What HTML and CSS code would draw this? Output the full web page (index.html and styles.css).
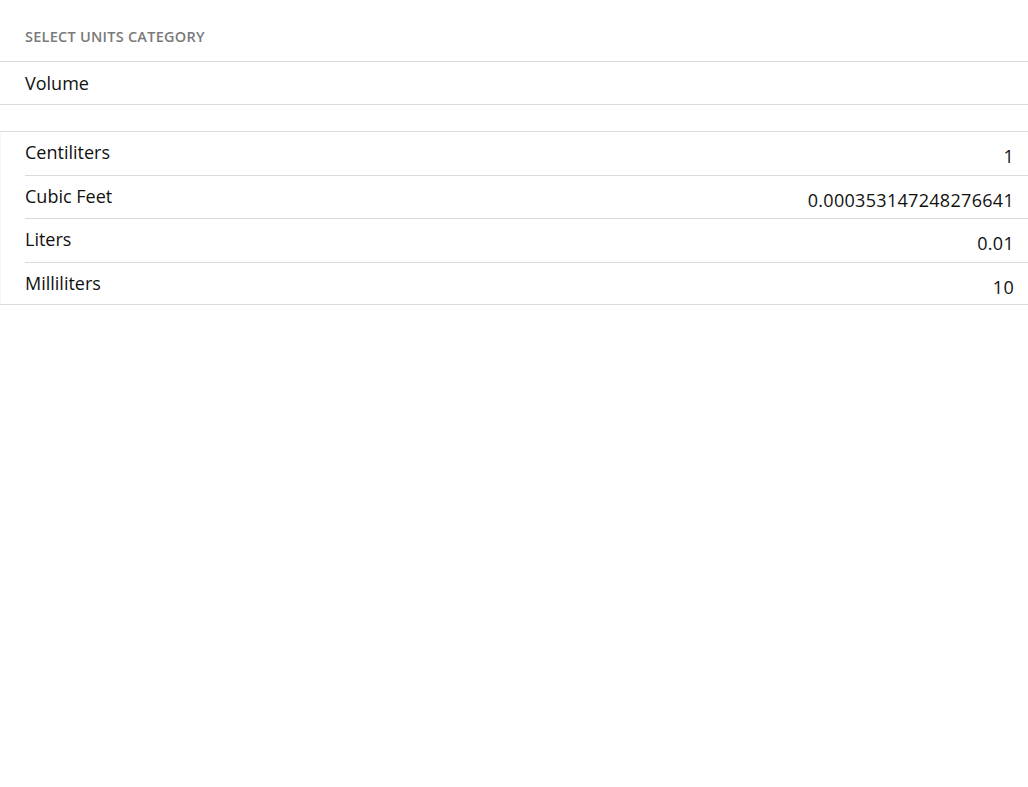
FILE: index.html
```html
<!DOCTYPE html>
<html>
<head>
<meta charset="utf-8">
<link rel="stylesheet" href="styles.css">
</head>
<body>
<div class="page">
  <div class="section-title">SELECT UNITS CATEGORY</div>
  <div class="category">Volume</div>
  <div class="spacer"></div>
  <ul class="units">
    <li class="unit"><span class="name">Centiliters</span><span class="value">1</span></li>
    <li class="unit"><span class="name">Cubic Feet</span><span class="value">0.000353147248276641</span></li>
    <li class="unit"><span class="name">Liters</span><span class="value">0.01</span></li>
    <li class="unit"><span class="name">Milliliters</span><span class="value">10</span></li>
  </ul>
</div>
</body>
</html>
```

FILE: styles.css
```css
html, body {
  margin: 0;
  padding: 0;
  background: #ffffff;
}
body {
  font-family: "Open Sans", "Noto Sans", sans-serif;
  color: #1a1a1a;
}
.page {
  width: 1028px;
}
.section-title {
  height: 61px;
  box-sizing: border-box;
  padding: 27px 0 0 25px;
  font-size: 14.5px;
  font-weight: 600;
  color: #7a7a7a;
  line-height: 20px;
  letter-spacing: 0.25px;
}
.category {
  height: 44px;
  box-sizing: border-box;
  border-top: 1px solid #dadada;
  border-bottom: 1px solid #dadada;
  padding: 0 0 0 25px;
  display: flex;
  align-items: center;
  font-size: 18px;
  color: #111;
}
.spacer {
  height: 26px;
}
.units {
  list-style: none;
  margin: 0;
  padding: 0;
  border-top: 1px solid #dadada;
  border-bottom: 1px solid #dadada;
  border-left: 1px solid #f5f5f5;
}
.unit {
  margin-left: 24px;
  height: 43px;
  box-sizing: border-box;
  display: flex;
  justify-content: space-between;
  padding-right: 14px;
  font-size: 18px;
  color: #111;
}
.unit:nth-child(3) {
  height: 44px;
}
.unit:last-child {
  height: 42px;
}
.unit + .unit {
  border-top: 1px solid #dadada;
}
.name {
  padding-top: 8px;
  line-height: 24px;
}
.value {
  padding-top: 12px;
  line-height: 24px;
  letter-spacing: 0.3px;
}
```
